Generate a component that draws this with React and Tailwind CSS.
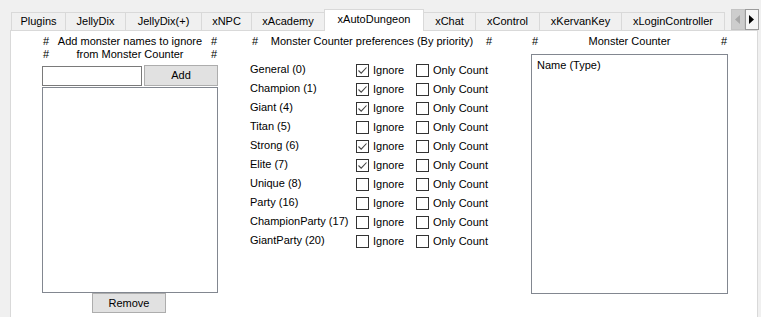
import { useState } from "react";

const tabs = [
  { name: "Plugins", w: "w-[54px]" },
  { name: "JellyDix", w: "w-[60px]" },
  { name: "JellyDix(+)", w: "w-[76px]" },
  { name: "xNPC", w: "w-[50px]" },
  { name: "xAcademy", w: "w-[73px]" },
  { name: "xAutoDungeon", w: "w-[100px]", active: true },
  { name: "xChat", w: "w-[51px]", noLeft: true },
  { name: "xControl", w: "w-[64px]" },
  { name: "xKervanKey", w: "w-[82px]" },
  { name: "xLoginController", w: "w-[104px]", last: true },
];

const monsterTypes = [
  { label: "General (0)", ignore: true },
  { label: "Champion (1)", ignore: true },
  { label: "Giant (4)", ignore: true },
  { label: "Titan (5)", ignore: false },
  { label: "Strong (6)", ignore: true },
  { label: "Elite (7)", ignore: true },
  { label: "Unique (8)", ignore: false },
  { label: "Party (16)", ignore: false },
  { label: "ChampionParty (17)", ignore: false },
  { label: "GiantParty (20)", ignore: false },
];

function CheckBox({ checked, onClick }) {
  return (
    <div
      onClick={onClick}
      className="w-[13px] h-[13px] border border-[#333333] bg-white flex items-center justify-center shrink-0"
    >
      {checked && (
        <svg width="11" height="11" viewBox="0 0 11 11">
          <path d="M1.5 5.5 L4.2 8.2 L9.5 2.5" fill="none" stroke="#444" strokeWidth="1.1" />
        </svg>
      )}
    </div>
  );
}

function HashLine({ children }) {
  return (
    <div className="flex h-[13px] items-center leading-[13px]">
      <span className="pl-px">#</span>
      <span className="flex-1 text-center">{children}</span>
      <span className="pr-px">#</span>
    </div>
  );
}

export default function App() {
  const [rows, setRows] = useState(
    monsterTypes.map((m) => ({ ...m, onlyCount: false }))
  );

  const toggle = (i, key) => {
    setRows(rows.map((r, j) => (j === i ? { ...r, [key]: !r[key] } : r)));
  };

  return (
    <div
      className="w-[761px] h-[317px] overflow-hidden bg-[#f0f0f0] text-[11px] text-black"
      style={{ fontFamily: '"Liberation Sans", Arial, sans-serif' }}
    >
      {/* Tab strip */}
      <div className="flex items-end h-[30px] pl-[11px]">
        {tabs.map((t) => (
          <div
            key={t.name}
            className={`${t.w} flex items-center justify-center border-t border-[#d9d9d9] ${
              t.noLeft ? "" : "border-l"
            } ${
              t.active
                ? "relative z-10 h-[22px] -mb-px bg-white border-r pb-[2px]"
                : "h-[18px] bg-[#f0f0f0]"
            } ${t.last ? "border-r" : ""}`}
          >
            {t.name}
          </div>
        ))}
        <div className="ml-[6px] self-start mt-[9px] flex">
          <div className="w-[14px] h-[21px] bg-[#cdcdcd] border border-[#c4c4c4] flex items-center justify-center">
            <svg width="6" height="9" viewBox="0 0 6 9">
              <path d="M5 0 L0 4.5 L5 9 Z" fill="#a8a8a8" />
            </svg>
          </div>
          <div className="w-[14px] h-[21px] bg-[#f5f5f5] border border-[#9a9a9a] flex items-center justify-center">
            <svg width="6" height="9" viewBox="0 0 6 9">
              <path d="M0 0 L5 4.5 L0 9 Z" fill="#000" />
            </svg>
          </div>
        </div>
      </div>

      {/* Panel */}
      <div className="ml-[10px] mr-[3px] h-[300px] bg-white border border-[#d9d9d9] flex pl-[31px] pt-[4px]">
        {/* Ignore list */}
        <div className="w-[176px] flex flex-col">
          <HashLine>Add monster names to ignore</HashLine>
          <HashLine>from Monster Counter</HashLine>
          <div className="mt-[4px] flex items-start">
            <input className="mt-px w-[100px] h-[20px] border border-[#7a7a7a] bg-white outline-none px-1" />
            <button className="ml-[2px] w-[74px] h-[21px] bg-[#e1e1e1] border border-[#adadad]">
              Add
            </button>
          </div>
          <div className="mt-px w-[176px] h-[206px] border border-[#828790] bg-white" />
          <button className="ml-[50px] w-[74px] h-[20px] bg-[#e1e1e1] border border-[#adadad]">
            Remove
          </button>
        </div>

        {/* Preferences */}
        <div className="ml-[32px] w-[242px] flex flex-col">
          <div className="flex h-[13px] items-center leading-[13px]">
            <span className="pl-[2px]">#</span>
            <span className="flex-1 text-center">Monster Counter preferences (By priority)</span>
            <span>#</span>
          </div>
          <div className="mt-[13px] flex flex-col">
            {rows.map((r, i) => (
              <div key={r.label} className="flex items-center h-[19px]">
                <span className="w-[106px] mb-[3px]">{r.label}</span>
                <CheckBox checked={r.ignore} onClick={() => toggle(i, "ignore")} />
                <span className="ml-[4px] w-[43px]">Ignore</span>
                <CheckBox checked={r.onlyCount} onClick={() => toggle(i, "onlyCount")} />
                <span className="ml-[4px]">Only Count</span>
              </div>
            ))}
          </div>
        </div>

        {/* Counter */}
        <div className="ml-[39px] w-[197px] flex flex-col">
          <HashLine>Monster Counter</HashLine>
          <div className="mt-[6px] h-[240px] border border-[#828790] bg-white pl-[5px] pt-[2px]">
            Name (Type)
          </div>
        </div>
      </div>
    </div>
  );
}
